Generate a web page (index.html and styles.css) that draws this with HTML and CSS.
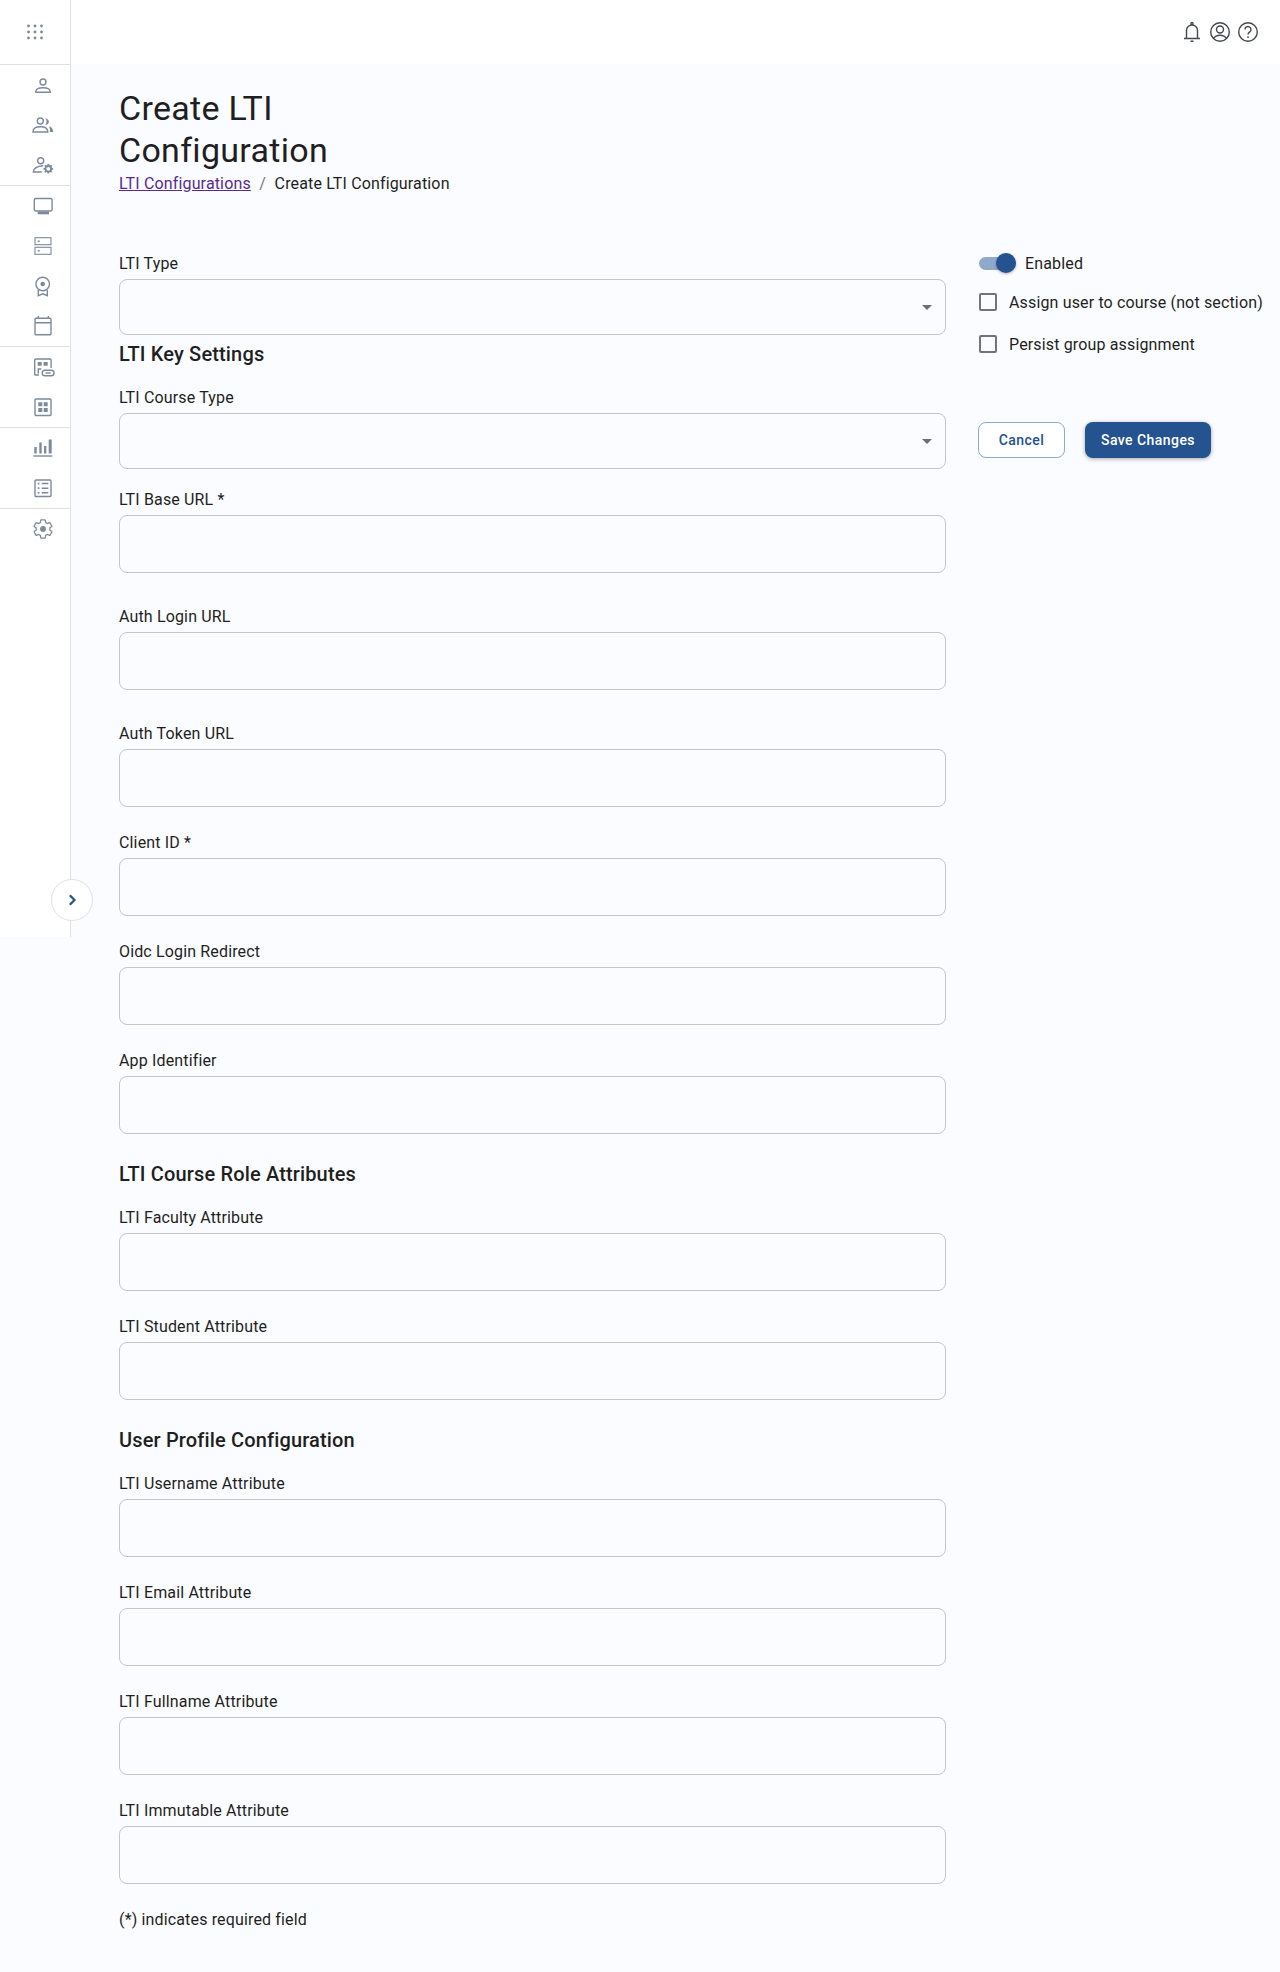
FILE: index.html
```html
<!DOCTYPE html>
<html lang="en">
<head>
    <meta charset="UTF-8">
    <meta name="viewport" content="width=device-width, initial-scale=1.0">
    <title>Create LTI Configuration</title>
    <link rel="stylesheet" href="styles.css">
</head>
<body>
    <div class="app">
        <aside class="sidebar">
            <div class="side-top">
                <svg class="apps-icon" viewBox="0 0 16 16" fill="#7d8a9c">
                    <circle cx="1.5" cy="2" r="1.4"/><circle cx="8" cy="2" r="1.4"/><circle cx="14.500" cy="2" r="1.4"/>
                    <circle cx="1.500" cy="8" r="1.4"/><circle cx="8" cy="8" r="1.4"/><circle cx="14.500" cy="8" r="1.4"/>
                    <circle cx="1.500" cy="14" r="1.4"/><circle cx="8" cy="14" r="1.4"/><circle cx="14.500" cy="14" r="1.4"/>
                </svg>
            </div>
            <div class="side-group">
                <div class="side-item">
                    <svg viewBox="0 0 24 24"><circle cx="12" cy="9" r="3"/><path d="M4.800 18.800c0-2.600 3.400-4 7.200-4s7.200 1.400 7.200 4v.5H4.800z"/></svg>
                </div>
                <div class="side-item">
                    <svg viewBox="0 0 24 24"><circle cx="9.300" cy="8" r="3"/><path d="M2 18.700c0-3.400 3.400-5 7.300-5s7.500 1.600 7.500 5v.3H2z"/><path class="solid" d="M14 5.300c2.300.2 3.900 1.700 3.900 3.400s-1.600 3.200-3.900 3.400c1-1 1.500-2.100 1.500-3.400S15 6.300 14 5.300zM18.300 13.200c2.200.8 3.900 2.800 3.900 5.800h-3.200c0-2.200-.2-4-.7-5.800z"/></svg>
                </div>
                <div class="side-item">
                    <svg viewBox="0 0 24 24"><circle cx="9.700" cy="7.800" r="3"/><path d="M12.300 12.700C7 13 2.500 15 2.300 19h8.400"/><circle class="gear-ring" cx="17.300" cy="15.800" r="2.800"/><path class="gear-ring" d="M17.300 11v2M17.300 18.600v2M12.500 15.800h2M20.100 15.800h2M13.900 12.400l1.400 1.400M19.300 17.800l1.400 1.400M20.700 12.400l-1.400 1.400M15.300 17.800l-1.400 1.400"/></svg>
                </div>
            </div>
            <div class="side-group">
                <div class="side-item">
                    <svg viewBox="0 0 24 24"><rect x="3.300" y="4.500" width="17.800" height="12.500" rx="1.500"/><path class="solid" d="M6.700 17.500h11.300v2.800H6.700z"/></svg>
                </div>
                <div class="side-item">
                    <svg class="thin" viewBox="0 0 24 24"><rect x="4" y="3.700" width="16" height="7"/><rect x="4" y="13.300" width="16" height="7"/><path class="solid" d="M6.700 6.500h2v1.400h-2zM6.700 16.100h2v1.400h-2z"/></svg>
                </div>
                <div class="side-item">
                    <svg viewBox="0 0 24 24"><circle cx="11.700" cy="10" r="6.800"/><circle class="solid" cx="11.700" cy="10" r="2.300"/><path d="M7.300 16v5.600l4.500-1.800 4.500 1.800V16"/></svg>
                </div>
                <div class="side-item">
                    <svg viewBox="0 0 24 24"><rect x="4" y="4.300" width="16" height="16.500" rx="1"/><path d="M4 8.700h16M7.300 2v2.300M17.300 2v2.300"/></svg>
                </div>
            </div>
            <div class="side-group">
                <div class="side-item">
                    <svg viewBox="0 0 24 24"><path d="M8 20H4.700a1 1 0 0 1-1-1V5a1 1 0 0 1 1-1h14.400a1 1 0 0 1 1 1v8"/><path class="solid" d="M6.700 7h4v3.800h-4zM12.500 7h4.200v3.800h-4.200z"/><path d="M7.300 18.500v-4.500h3"/><rect x="11.200" y="15.200" width="11.800" height="5.600" rx="2.800"/><path d="M14.500 18h5.200"/></svg>
                </div>
                <div class="side-item">
                    <svg viewBox="0 0 24 24"><rect x="4" y="4" width="16" height="16.500" rx="1"/><path class="solid" d="M7.300 7.300h4v4h-4zM12.700 7.300h4v4h-4zM7.300 13h4v4h-4zM12.700 13h4v4h-4z"/></svg>
                </div>
            </div>
            <div class="side-group">
                <div class="side-item">
                    <svg viewBox="0 0 24 24"><path d="M2.300 20h19"/><path class="solid" d="M3.300 11h2.400v6.600H3.300zM8.300 6.600h2.400v11H8.300zM13 10h2.300v7.600H13zM17.700 3.600h3v14h-3z"/></svg>
                </div>
                <div class="side-item">
                    <svg viewBox="0 0 24 24"><rect x="4" y="4" width="16" height="16.500" rx="1"/><path d="M10.700 7.500h6.600M10.700 12.200h6.600M10.700 16.800h6.600"/><path class="solid" d="M6.700 6.700h1.700v1.700H6.700zM6.700 11.300h1.700V13H6.700zM6.700 16h1.700v1.700H6.700z"/></svg>
                </div>
            </div>
            <div class="side-group side-last">
                <div class="side-item">
                    <svg class="settings-icon" viewBox="0 0 24 24"><circle class="solid" cx="12" cy="12" r="3.200"/><path d="M19.430 12.980c.04-.32.07-.64.07-.98s-.03-.66-.07-.98l2.110-1.650c.19-.15.24-.42.12-.64l-2-3.460c-.12-.22-.39-.3-.61-.22l-2.490 1c-.52-.4-1.080-.73-1.690-.98l-.38-2.650C14.460 2.180 14.250 2 14 2h-4c-.25 0-.46.18-.49.42l-.38 2.650c-.61.25-1.170.59-1.690.98l-2.490-1c-.23-.09-.49 0-.61.22l-2 3.460c-.13.22-.07.49.12.64l2.110 1.650c-.04.32-.07.65-.07.98s.03.66.07.98l-2.110 1.650c-.19.15-.24.42-.12.64l2 3.460c.12.22.39.3.61.22l2.490-1c.52.4 1.080.73 1.690.98l.38 2.650c.03.24.24.42.49.42h4c.25 0 .46-.18.49-.42l.38-2.650c.61-.25 1.170-.59 1.690-.98l2.490 1c.23.09.49 0 .61-.22l2-3.460c.12-.22.07-.49-.12-.64l-2.110-1.650z"/></svg>
                </div>
            </div>
            <button class="collapse-btn" type="button">
                <svg viewBox="0 0 12 12"><path d="M3.800 1.200L8.500 6l-4.700 4.800"/></svg>
            </button>
        </aside>

        <div class="main">
            <header class="topbar">
                <svg viewBox="0 0 24 24"><path d="M4 18.500h16M6.500 18.500v-8a5.500 5.500 0 0 1 11 0v8M11 5V3.500a1 1 0 0 1 2 0V5M10.500 21.300h3"/></svg>
                <svg viewBox="0 0 24 24"><circle cx="12" cy="12" r="9.300"/><circle cx="12" cy="9.500" r="3.500"/><path d="M5.500 18.500c1.500-2.300 3.800-3.200 6.500-3.200s5 .9 6.500 3.200"/></svg>
                <svg viewBox="0 0 24 24"><circle cx="12" cy="12" r="9.300"/><path d="M9 9.500a3 3 0 1 1 4.800 2.400c-1.100.8-1.800 1.400-1.800 2.600"/><path d="M12 16.200v1.800"/></svg>
            </header>

            <div class="content">
                <div class="page-head">
                    <h1>Create LTI<br>Configuration</h1>
                    <div class="breadcrumb">
                        <a href="#">LTI Configurations</a>
                        <span class="sep">/</span>
                        <span>Create LTI Configuration</span>
                    </div>
                </div>

                <div class="layout">
                    <form class="form-col">
                        <div class="field field-select">
                            <label>LTI Type</label>
                            <div class="box select-box"><span class="caret"></span></div>
                        </div>

                        <h2 class="first-head">LTI Key Settings</h2>
                        <div class="field field-select">
                            <label>LTI Course Type</label>
                            <div class="box select-box"><span class="caret"></span></div>
                        </div>
                        <div class="field base-url wide-gap">
                            <label>LTI Base URL *</label>
                            <input class="box" type="text">
                        </div>
                        <div class="field wide-gap">
                            <label>Auth Login URL</label>
                            <input class="box" type="text">
                        </div>
                        <div class="field">
                            <label>Auth Token URL</label>
                            <input class="box" type="text">
                        </div>
                        <div class="field">
                            <label>Client ID *</label>
                            <input class="box" type="text">
                        </div>
                        <div class="field">
                            <label>Oidc Login Redirect</label>
                            <input class="box" type="text">
                        </div>
                        <div class="field">
                            <label>App Identifier</label>
                            <input class="box" type="text">
                        </div>

                        <h2>LTI Course Role Attributes</h2>
                        <div class="field">
                            <label>LTI Faculty Attribute</label>
                            <input class="box" type="text">
                        </div>
                        <div class="field">
                            <label>LTI Student Attribute</label>
                            <input class="box" type="text">
                        </div>

                        <h2>User Profile Configuration</h2>
                        <div class="field">
                            <label>LTI Username Attribute</label>
                            <input class="box" type="text">
                        </div>
                        <div class="field">
                            <label>LTI Email Attribute</label>
                            <input class="box" type="text">
                        </div>
                        <div class="field">
                            <label>LTI Fullname Attribute</label>
                            <input class="box" type="text">
                        </div>
                        <div class="field">
                            <label>LTI Immutable Attribute</label>
                            <input class="box" type="text">
                        </div>

                        <p class="required-note">(*) indicates required field</p>
                    </form>

                    <div class="side-col">
                        <div class="toggle-row">
                            <span class="toggle"><span class="toggle-knob"></span></span>
                            <span>Enabled</span>
                        </div>
                        <div class="check-row">
                            <span class="check"></span>
                            <span>Assign user to course (not section)</span>
                        </div>
                        <div class="check-row">
                            <span class="check"></span>
                            <span>Persist group assignment</span>
                        </div>
                        <div class="actions">
                            <button class="btn btn-outline" type="button">Cancel</button>
                            <button class="btn btn-primary" type="button">Save Changes</button>
                        </div>
                    </div>
                </div>
            </div>
        </div>
    </div>
</body>
</html>
```

FILE: styles.css
```css
* {
    box-sizing: border-box;
}

body {
    margin: 0;
    background-color: #fbfcff;
    font-family: Roboto, sans-serif;
    font-size: 16px;
    letter-spacing: 0.15px;
    color: #1f1f23;
}

.app {
    display: flex;
    align-items: flex-start;
    min-height: 1972px;
}

/* sidebar */
.sidebar {
    position: relative;
    flex: none;
    width: 71px;
    height: 937px;
    background-color: #fff;
    border-right: 1px solid #dfe1e5;
}

.side-top {
    display: flex;
    align-items: center;
    justify-content: center;
    height: 65px;
    border-bottom: 1px solid #dfe1e5;
}

.apps-icon {
    width: 16px;
    height: 16px;
}

.side-group {
    border-bottom: 1px solid #dfe1e5;
    padding-left: 16px;
}

.side-last {
    border-bottom: none;
}

.side-item {
    display: flex;
    align-items: center;
    justify-content: center;
    height: 40px;
}

.side-item svg {
    width: 24px;
    height: 24px;
    fill: none;
    stroke: #7d8a9c;
    stroke-width: 1.4;
}

.side-item svg.thin {
    stroke-width: 1.1;
}

.side-item svg.settings-icon {
    width: 22px;
    height: 22px;
}

.side-item svg .solid {
    fill: #7d8a9c;
    stroke: none;
}

.side-item svg .gear-ring {
    stroke-width: 1.8;
}

.collapse-btn {
    position: absolute;
    top: 879px;
    left: 51px;
    width: 42px;
    height: 42px;
    padding: 0;
    display: flex;
    align-items: center;
    justify-content: center;
    background-color: #fff;
    border: 1px solid #e0e1e4;
    border-radius: 50%;
}

.collapse-btn svg {
    width: 12px;
    height: 12px;
    fill: none;
    stroke: #24538f;
    stroke-width: 2.2;
}

/* top bar */
.main {
    flex: 1;
    min-width: 0;
}

.topbar {
    display: flex;
    align-items: center;
    justify-content: flex-end;
    gap: 4px;
    height: 64px;
    padding-right: 20px;
    background-color: #fff;
}

.topbar svg {
    width: 24px;
    height: 24px;
    fill: none;
    stroke: #45484f;
    stroke-width: 1.4;
}

/* page */
.content {
    padding: 23px 0 0 48px;
}

h1 {
    margin: 0;
    font-size: 34px;
    font-weight: 400;
    line-height: 42px;
    letter-spacing: 0.3px;
}

.breadcrumb {
    display: flex;
    gap: 8.5px;
    margin-top: 1px;
    font-size: 16px;
    line-height: 24px;
}

.breadcrumb a {
    color: #5a2a91;
}

.sep {
    color: #75787f;
}

.layout {
    display: flex;
    margin-top: 57px;
}

.form-col {
    width: 827px;
    flex: none;
}

.field {
    margin-bottom: 25px;
}

.field-select {
    margin-bottom: 0;
}

.field label {
    display: block;
    padding-top: 1px;
    margin-bottom: 5px;
    font-size: 16px;
    line-height: 20px;
}

.box {
    display: block;
    width: 100%;
    height: 58px;
    background-color: transparent;
    border: 1px solid #c4c6ca;
    border-radius: 8px;
}

.select-box {
    position: relative;
    height: 56px;
}

.caret {
    position: absolute;
    top: 25px;
    right: 13px;
    border-left: 5px solid transparent;
    border-right: 5px solid transparent;
    border-top: 5px solid #6b6d72;
}

h2 {
    margin: 0 0 19px;
    padding-top: 1px;
    font-size: 20px;
    font-weight: 500;
    line-height: 28px;
}

.first-head {
    margin: 5px 0 19px;
    padding-top: 0;
}

.base-url {
    margin-top: 20px;
}

.wide-gap {
    margin-bottom: 33px;
}

.required-note {
    margin: -1px 0 0;
    font-size: 16px;
    line-height: 24px;
}

/* right column */
.side-col {
    margin-left: 32px;
}

.toggle-row,
.check-row {
    display: flex;
    align-items: center;
    padding-left: 1px;
    white-space: nowrap;
}

.toggle-row {
    gap: 9px;
    height: 24px;
    margin-top: -2px;
}

.toggle {
    position: relative;
    width: 37px;
    height: 13px;
    background-color: #8fa9cb;
    border-radius: 7px;
}

.toggle-knob {
    position: absolute;
    top: -3.5px;
    right: 0;
    width: 20px;
    height: 20px;
    background-color: #24538f;
    border-radius: 50%;
    box-shadow: 0 1px 3px rgba(0,0,0,0.3);
}

.check-row {
    gap: 12px;
    height: 24px;
    margin-top: 15px;
}

.check-row + .check-row {
    margin-top: 18px;
}

.check {
    width: 18px;
    height: 18px;
    border: 2px solid #757575;
    border-radius: 2px;
}

.actions {
    display: flex;
    gap: 20px;
    margin-top: 66px;
}

.btn {
    height: 36px;
    font-family: Roboto, sans-serif;
    font-size: 14px;
    font-weight: 500;
    border-radius: 8px;
    letter-spacing: 0.45px;
}

.btn-outline {
    width: 87px;
    color: #24538f;
    background-color: #fff;
    border: 1px solid #8fa9cb;
}

.btn-primary {
    width: 126px;
    color: #fff;
    background-color: #24538f;
    border: none;
    box-shadow: 0 1px 4px rgba(0,0,0,0.35);
}
```
